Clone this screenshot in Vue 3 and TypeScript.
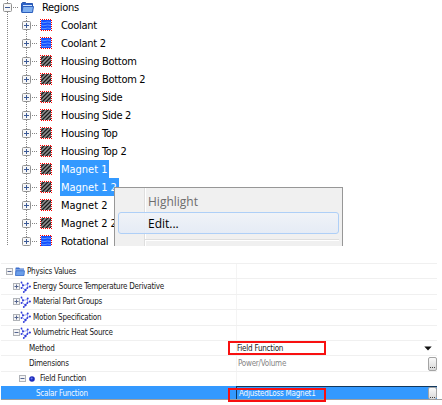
<script setup lang="ts">
type Kind = 'fluid' | 'solid'
interface Region { name: string; kind: Kind; selected?: boolean }
interface Prop {
  label: string
  level: 'top' | 'node' | 'leaf' | 'sub' | 'subleaf'
  box?: 'plus' | 'minus'
  icon?: 'folder' | 'molecule' | 'dot'
  value?: string
  control?: 'arrow' | 'button'
  marked?: boolean
  muted?: boolean
  selected?: boolean
}
const regions: Region[] = [
  { name: 'Coolant', kind: 'fluid' },
  { name: 'Coolant 2', kind: 'fluid' },
  { name: 'Housing Bottom', kind: 'solid' },
  { name: 'Housing Bottom 2', kind: 'solid' },
  { name: 'Housing Side', kind: 'solid' },
  { name: 'Housing Side 2', kind: 'solid' },
  { name: 'Housing Top', kind: 'solid' },
  { name: 'Housing Top 2', kind: 'solid' },
  { name: 'Magnet 1', kind: 'solid', selected: true },
  { name: 'Magnet 1 2', kind: 'solid', selected: true },
  { name: 'Magnet 2', kind: 'solid' },
  { name: 'Magnet 2 2', kind: 'solid' },
  { name: 'Rotational', kind: 'fluid' },
]
const props: Prop[] = [
  { label: 'Physics Values', level: 'top', box: 'minus', icon: 'folder' },
  { label: 'Energy Source Temperature Derivative', level: 'node', box: 'plus', icon: 'molecule' },
  { label: 'Material Part Groups', level: 'node', box: 'plus', icon: 'molecule' },
  { label: 'Motion Specification', level: 'node', box: 'plus', icon: 'molecule' },
  { label: 'Volumetric Heat Source', level: 'node', box: 'minus', icon: 'molecule' },
  { label: 'Method', level: 'leaf', value: 'Field Function', control: 'arrow', marked: true },
  { label: 'Dimensions', level: 'leaf', value: 'Power/Volume', control: 'button', muted: true },
  { label: 'Field Function', level: 'sub', box: 'minus', icon: 'dot' },
  { label: 'Scalar Function', level: 'subleaf', value: 'AdjustedLoss Magnet1', control: 'button', marked: true, selected: true },
]
</script>

<template>
  <main class="screen">
    <section class="tree">
      <div class="row root">
        <svg class="expander" viewBox="0 0 9 9"><rect x=".5" y=".5" width="8" height="8" rx="1" fill="#f7f7f7" stroke="#929292" /><path d="M2 4.5h5" stroke="#3c5a96" /></svg>
        <i class="dash"></i>
        <svg class="folder" viewBox="0 0 13 11"><path d="M.5 9.500v-8l1-1h3l1 1h6v8z" fill="#2e63c8" stroke="#2a58b0" /><path d="M2 3.500h9" stroke="#d4e6fc" /><path d="M.8 10.500 2 4.500h10.500l-1 6z" fill="#7fb0f0" stroke="#2d5fbd" /></svg>
        <span class="name">Regions</span>
      </div>
      <div class="children">
        <div v-for="r in regions" :key="r.name" class="row">
          <svg class="expander" viewBox="0 0 9 9"><rect x=".5" y=".5" width="8" height="8" rx="1" fill="#f7f7f7" stroke="#929292" /><path d="M2 4.500h5M4.500 2v5" stroke="#3c5a96" /></svg>
          <i class="dash"></i>
          <span class="region">
            <svg viewBox="0 0 10 10">
              <template v-if="r.kind === 'fluid'">
                <rect width="10" height="10" fill="#1450ff" />
                <path d="M0 1.500q2 2 4 1t6 0M0 4.500q2 2 4 1t6 0M0 7.500q2 2 4 1t6 0" fill="none" stroke="#5c94ff" stroke-width="1" />
              </template>
              <template v-else>
                <rect width="10" height="10" fill="#8e8e8e" />
                <path d="M-1 4 4-1M-1 8 8-1M0 11 11 0M4 11l7-7M8 11l3-3" stroke="#1c1c1c" stroke-width="1.300" />
              </template>
            </svg>
          </span>
          <span class="name" :class="{ selected: r.selected, wide: r.name.startsWith('Magnet') }">{{ r.name }}</span>
        </div>
      </div>
      <div class="menu">
        <div class="item disabled">Highlight</div>
        <div class="item active">Edit...</div>
        <div class="separator"></div>
      </div>
    </section>

    <section class="sheet">
      <div v-for="p in props" :key="p.level + p.label" class="line" :class="[p.level, { picked: p.selected }]">
        <div class="key">
          <svg v-if="p.box" class="small-box" viewBox="0 0 7 7"><rect x=".5" y=".5" width="6" height="6" fill="#f4f4f5" stroke="#b0b3b8" /><path :d="p.box === 'plus' ? 'M1.500 3.500h4M3.500 1.500v4' : 'M1.500 3.500h4'" stroke="#55658f" /></svg>
          <svg v-if="p.icon === 'folder'" class="small-folder" viewBox="0 0 10 9"><path d="M.5 8.500V1l.5-.5h3l1 1h4v7z" fill="#3c6fce" /><path d="M1 3h8" stroke="#b9d2f5" /><path d="M.5 8.500 1 3.800h8.500l-.5 4.700z" fill="#6b9ee9" stroke="#3468c5" stroke-width=".7" /></svg>
          <svg v-else-if="p.icon === 'molecule'" class="molecule" viewBox="0 0 11 12"><path d="M1.500 1.500 3 4.500 7.500 3.500M3 4.500 2.500 7 5.500 9 7.500 6.500 10 5.500M7.500 3.500V6.500M5.500 9 4.500 11" fill="none" stroke="#8f97e6" stroke-width=".9" /><g fill="#2f3bdc"><circle cx="1.500" cy="1.500" r=".9" /><circle cx="3" cy="4.300" r="1" /><circle cx="7.700" cy="2.500" r="1" /><circle cx="9.900" cy="5.500" r="1.100" /><circle cx="7.300" cy="7" r=".9" /><circle cx="5.500" cy="9" r="1.200" /><circle cx="1.500" cy="7" r=".9" /><circle cx="3.800" cy="11" r=".9" /></g></svg>
          <svg v-else-if="p.icon === 'dot'" class="dot" viewBox="0 0 6 6"><circle cx="3" cy="3" r="2.800" fill="#1d2bbb" /><circle cx="2.600" cy="2.400" r="1" fill="#6d7cf0" /></svg>
          <span class="label">{{ p.label }}</span>
        </div>
        <div class="value" :class="{ muted: p.muted }">
          <span class="label">{{ p.value }}</span>
          <svg v-if="p.control === 'arrow'" class="arrow" viewBox="0 0 8 5"><path d="M.3.5h7.400L4 4.500z" fill="#111" /></svg>
          <span v-if="p.control === 'button'" class="more"><i></i><i></i><i></i></span>
          <b v-if="p.marked" class="mark"></b>
        </div>
      </div>
    </section>
  </main>
</template>

<style>
body { background: #fff; }
</style>
<style scoped>
* { box-sizing: border-box; }
.screen { width: 442px; height: 405px; overflow: hidden; background: #fff; font-family: "DejaVu Sans Condensed", "DejaVu Sans", sans-serif; font-stretch: condensed; color: #000; }
svg { display: block; flex: none; }
.tree { position: relative; height: 246px; overflow: hidden; font-size: 11px; letter-spacing: -.3px; background: repeating-linear-gradient(#858585 0 1px, transparent 1px 2px) 7px 0 / 1px 246px no-repeat; }
.row { display: flex; align-items: center; height: 18px; white-space: pre; }
.root { padding-left: 3px; margin-top: -2px; }
.children { padding-left: 22px; background: repeating-linear-gradient(#858585 0 1px, transparent 1px 2px) 26px 0 / 1px 234px no-repeat; }
.expander { width: 9px; height: 9px; }
.dash { width: 6px; height: 1px; background: repeating-linear-gradient(90deg, transparent 0 1px, #858585 1px 2px); }
.folder { width: 13px; height: 11px; margin-left: 3px; }
.region { flex: none; width: 12px; height: 12px; margin-left: 3px; padding: 1px; background: repeating-linear-gradient(90deg, #f00 0 1px, #fff 1px 2px) 0 0 / 12px 1px no-repeat, repeating-linear-gradient(90deg, #fff 0 1px, #f00 1px 2px) 0 11px / 12px 1px no-repeat, repeating-linear-gradient(#f00 0 1px, #fff 1px 2px) 0 0 / 1px 12px no-repeat, repeating-linear-gradient(#fff 0 1px, #f00 1px 2px) 11px 0 / 1px 12px no-repeat; }
.region svg { width: 10px; height: 10px; }
.name { height: 18px; line-height: 18px; margin-left: 7px; padding: 1px 1px 0; }
.name { line-height: 19px; padding-top: 0; }
.children .name { margin-left: 8px; }
.name.wide { letter-spacing: -.02px; }
.name.selected { background: #3399ff; color: #fff; padding-right: 2px; }
.menu { position: absolute; left: 114px; top: 187px; width: 229px; height: 70px; padding: 4px 3px; border: 1px solid #979797; background: linear-gradient(90deg, #f0f0f0 29px, #dedede 29px 30px, #fff 30px 31px, #f0f0f0 31px); font-family: "Open Sans", sans-serif; font-stretch: normal; font-size: 12px; letter-spacing: 0; }
.item { height: 20px; line-height: 20px; padding-left: 30px; }
.disabled { color: #6d6d6d; }
.active { height: 22px; line-height: 21px; border: 1px solid #aecff7; border-radius: 3px; background: linear-gradient(#f0f3f8e8, #e4ebf6e8); padding-left: 29px; }
.separator { height: 2px; margin: 5px 0 0 27px; border-top: 1px solid #dedede; background: #fff; }

.sheet { margin: 17px 0 0 1px; font-size: 8px; letter-spacing: -.23px; color: #202020; }
.line { display: grid; grid-template-columns: 235px 201px; width: 436px; height: 15.400px; border-top: 1px solid #f0f0f0; }
.key, .value { display: flex; align-items: center; white-space: pre; min-width: 0; }
.value { position: relative; border-left: 1px solid #f4f4f4; }
.top .key { padding-left: 5px; }
.node .key { padding-left: 12px; }
.leaf .key { padding-left: 28px; }
.sub .key { padding-left: 18px; }
.subleaf .key { padding-left: 35px; }
.small-box { width: 7px; height: 7px; }
.small-folder { width: 10px; height: 9px; margin: 0 2px; }
.molecule { width: 11px; height: 12px; margin: 0 2px 0 0; }
.dot { width: 6px; height: 6px; margin: 0 5px 0 3px; }
.muted { color: #858585; padding-left: 1px; }
.arrow { width: 8px; height: 5px; margin-left: auto; margin-right: 5px; }
.more { display: flex; align-items: flex-end; justify-content: center; gap: 1px; width: 9px; height: 14px; margin-left: auto; padding-bottom: 2px; border: 1px solid #a4a4a4; border-radius: 2px; background: linear-gradient(#fafafa, #d8d8d8); }
.more i { width: 1px; height: 1px; background: #444; }
.mark { position: absolute; left: -9px; top: 0; width: 98px; height: 14px; border: 2px solid #f81010; }
.picked { position: relative; width: 441px; height: 14px; border-top: 0; border-bottom: 1px solid #9e9e9e; color: #f4faff; }
.picked .label { padding-top: 1px; }
.picked .key { background: #3399ff; }
.picked .value { background: #3399ff; border-top: 1px solid #12385d; border-left: 1px solid #12385d; padding-left: 2px; }
.picked .more { height: 12px; padding-bottom: 1px; border-bottom: 0; }
.picked .mark { top: 1px; height: 14px; }
</style>
